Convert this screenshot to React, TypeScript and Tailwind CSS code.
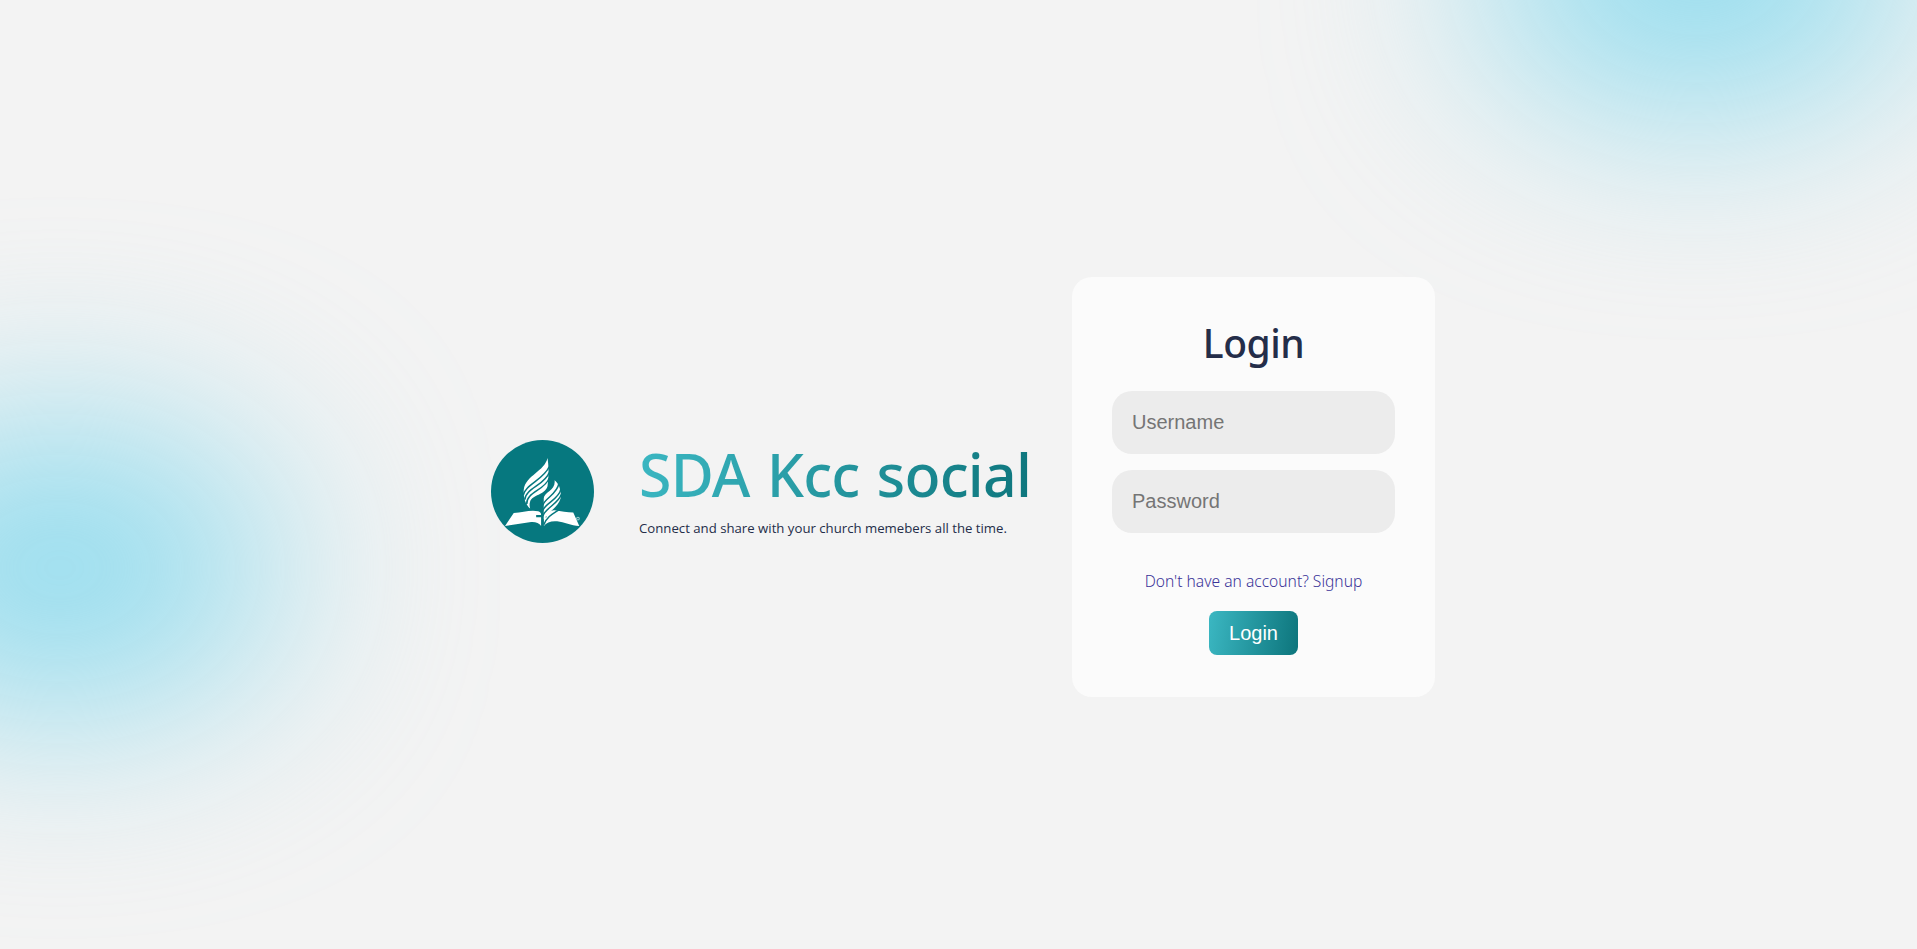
function Logo() {
  return (
    <svg viewBox="36 30 308 308" className="mt-[9px] h-[103px] w-[103px] shrink-0" aria-hidden="true">
      <circle cx="190" cy="184" r="154" fill="#06787f" />
      <g fill="#fff">
        <path d="M205 84C208 104 210 132 205 168C196 196 160 192 153 214C150 222 152 230 153 235C141 226 131 200 134 178C140 136 196 124 205 84Z" />
        <path d="M104 248C131 246 155 238 177 243C182 244 186 248 186 254H171V261H186V287C180 278 169 274 156 275L78 287Z" />
        <path d="M196 261H203L198 253C208 247 214 239 226 240C246 243 264 247 282 247L300 287C275 286 255 276 234 273C216 271 202 277 194 287V261Z" />
        <path d="M226 150C240 160 247 182 244 205C238 228 212 242 193 268V205C197 184 231 180 226 150Z" />
      </g>
      <g fill="none" stroke="#06787f" strokeWidth="4.5">
        <path d="M132 196C137 164 194 148 210 110" />
        <path d="M137 209C137 176 198 164 210 127" />
        <path d="M143 222C139 187 198 180 210 144" />
        <path d="M191 225C197 203 234 193 239 160" />
        <path d="M191 241C197 219 240 207 245 177" />
        <path d="M191 257C199 233 238 220 246 193" />
        <path d="M194 283C204 258 222 250 240 238" />
      </g>
      <path d="M190 196V290" stroke="#06787f" strokeWidth="6" />
      <circle cx="296" cy="265" r="4" fill="none" stroke="#9fd0d2" strokeWidth="3" />
    </svg>
  );
}

const field =
  "h-[63px] w-full rounded-[20px] bg-[#ececec] px-5 text-[20px] text-gray-800 outline-none placeholder:text-[#757575] font-['Liberation_Sans',Arial,sans-serif]";

export default function App() {
  return (
    <div className="relative h-screen overflow-hidden bg-[#f3f3f3] font-['Open_Sans','Noto_Sans',sans-serif] text-[#242d49]">
      <div className="absolute top-[-171px] right-0 h-[280px] w-[440px] rounded-[50%] bg-[#8edbee] blur-[100px]" />
      <div className="absolute top-[428px] -left-40 h-[280px] w-[440px] rounded-[50%] bg-[#8edbee] blur-[100px]" />

      <main className="relative flex items-start pt-[277px] pl-[491px]">
        <section className="flex w-[581px] items-start gap-[45px] pt-[154px]">
          <Logo />
          <div className="pt-[3px]">
            <h1 className="w-[394px] bg-[linear-gradient(98.63deg,#3bb7c2_0%,#0d757c_100%)] bg-clip-text font-['Noto_Sans',sans-serif] text-[59px] leading-[80px] font-medium tracking-[-0.8px] [word-spacing:2.5px] whitespace-nowrap text-transparent">
              SDA Kcc social
            </h1>
            <p className="mt-[4px] text-[13.2px] leading-5 whitespace-nowrap">
              Connect and share with your church memebers all the time.
            </p>
          </div>
        </section>

        <form
          className="flex h-[420px] w-[363px] flex-col items-center rounded-[20px] bg-[#fbfbfb] px-10"
          onSubmit={(e) => e.preventDefault()}
        >
          <h2 className="mt-[39px] h-[75px] font-['Noto_Sans',sans-serif] text-[39px] leading-[53px] font-medium tracking-[-0.5px]">Login</h2>
          <input className={field} type="text" placeholder="Username" />
          <input className={`${field} mt-4`} type="password" placeholder="Password" />
          <a href="#" className="mt-[36px] font-['Noto_Sans',sans-serif] text-[15.6px] leading-6 font-light whitespace-nowrap text-[#3a3398]">
            Don't have an account? Signup
          </a>
          <button className="mt-[18px] h-11 w-[89px] rounded-lg bg-[linear-gradient(98.63deg,#3bb7c2_0%,#0d757c_100%)] font-['Liberation_Sans',Arial,sans-serif] text-[20px] text-white">
            Login
          </button>
        </form>
      </main>
    </div>
  );
}
